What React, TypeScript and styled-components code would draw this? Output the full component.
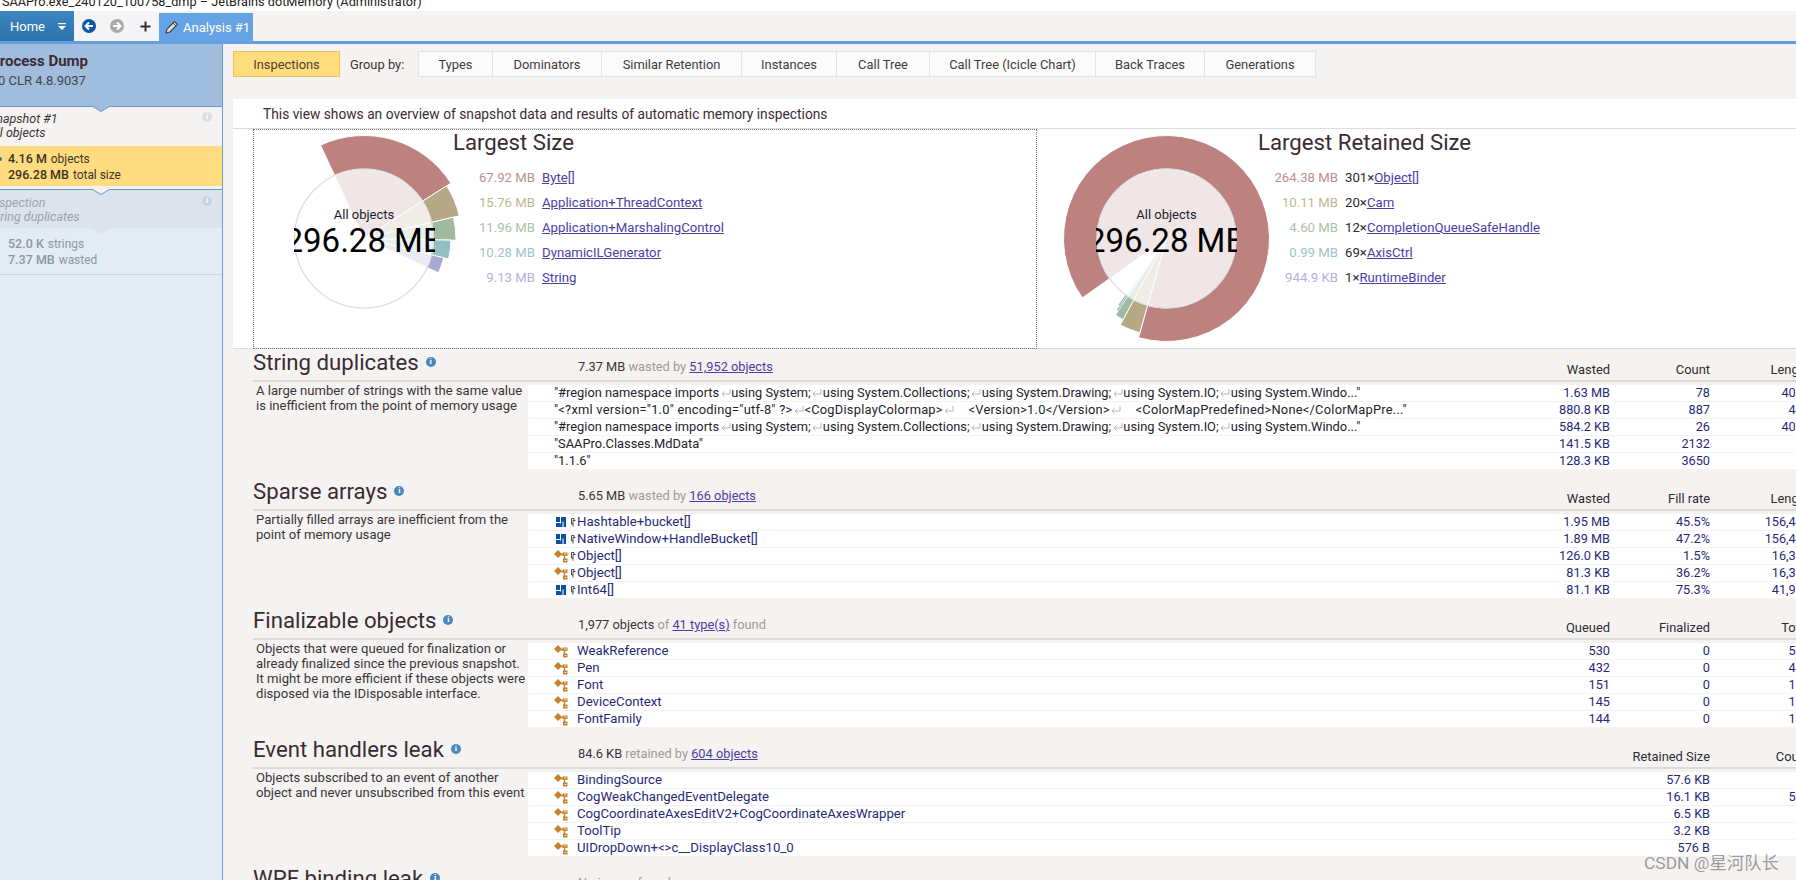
import React from "react";
import styled, { createGlobalStyle } from "styled-components";

const Global = createGlobalStyle`
  html, body { margin: 0; padding: 0; background: #fff; }
  body { font-family: Roboto, "Open Sans", "Liberation Sans", sans-serif; color: #333; }
  * { box-sizing: border-box; }
`;

const Page = styled.div`
  position: relative; width: 1796px; height: 880px; overflow: hidden;
  display: flex; flex-direction: column; background: #f4f3f1;
  font-size: 13.2px;
`;
const TitleBar = styled.div`
  height: 11px; background: #fff; overflow: hidden; flex: none;
  padding-left: 2px; font-size: 12.7px; line-height: 18px; color: #222; white-space: nowrap;
  & > span { display: block; margin-top: -7px; }
`;
const TabBar = styled.div`
  height: 33px; flex: none; display: flex; align-items: stretch; background: #f4f3f1;
  border-bottom: 3px solid #639fe0;
`;
const HomeTab = styled.div`
  width: 74px; background: linear-gradient(#3b86c2, #2c73ab); color: #fff;
  display: flex; align-items: center; justify-content: space-between; padding: 0 8px 0 10px; font-size: 13px;
`;
const NavButton = styled.div`
  width: 28px; display: flex; align-items: center; justify-content: center;
  &:first-of-type { margin-left: 1px; }
`;
const NavGroup = styled.div`
  display: flex; width: 85px; background: #f4f4f6;
`;
const AnalysisTab = styled.div`
  margin-top: 2px; width: 94px; background: #65a3e5; color: #fff; display: flex; align-items: center; gap: 4px;
  padding-left: 6px; font-size: 13px; white-space: nowrap;
`;
const Body = styled.div`
  flex: 1; display: flex; min-height: 0;
`;
const Sidebar = styled.div`
  width: 223px; flex: none; display: flex; flex-direction: column; overflow: hidden;
  border-right: 1px solid #6e9ac8; white-space: nowrap;
`;
const Notch = styled.div<{ $c: string; $line?: string }>`
  position: relative;
  &::before, &::after {
    content: ""; position: absolute; left: 91px; width: 0; height: 0;
    border-left: 10px solid transparent; border-right: 10px solid transparent; z-index: 2;
  }
  &::before { bottom: -6px; border-top: 6px solid ${(p) => p.$line ?? p.$c}; }
  &::after { bottom: -4.6px; border-top: 6px solid ${(p) => p.$c}; }
`;
const ProcessHead = styled(Notch)`
  height: 63px; flex: none; background: #a1bddd; border-bottom: 1px solid #6e98c4; padding-top: 7px; color: #3b2b33;
`;
const ProcessName = styled.div`
  margin-left: -10px; font-size: 15px; font-weight: 700; line-height: 20px;
`;
const ProcessSub = styled.div`
  margin-left: -2px; font-size: 13px; line-height: 20px; color: #444;
`;
const SnapshotHead = styled.div`
  flex: none; display: flex; justify-content: space-between; height: 39px;
  padding: 5px 10px 0 0; font-style: italic; line-height: 14px; font-size: 12.5px;
  background: #f4f3f1; color: #3b3338;
`;
const InspectHead = styled(Notch)`
  flex: none; display: flex; justify-content: space-between; height: 38px;
  padding: 6px 10px 0 0; font-style: italic; line-height: 14px; font-size: 12.5px;
  background: #dce3ec; color: #9aa3ae;
`;
const StepText = styled.div`
  margin-left: -11px;
`;
const InfoDot = styled.span<{ $c: string; $s?: number }>`
  display: inline-flex; align-items: center; justify-content: center; flex: none;
  width: ${(p) => p.$s ?? 10}px; height: ${(p) => p.$s ?? 10}px; border-radius: 50%; background: ${(p) => p.$c};
  color: #fff; font-size: 8px; font-weight: 700; line-height: 1; font-family: "Liberation Serif", serif;
`;
const StatBlock = styled.div<{ $bg: string; $c: string; $h: number }>`
  position: relative; flex: none; height: ${(p) => p.$h}px; background: ${(p) => p.$bg}; color: ${(p) => p.$c};
  padding: 5px 0 0 8px; font-size: 11.9px; line-height: 16px;
  & b { font-weight: 500; font-size: 12.5px; margin-right: 4px; }
`;
const Bullet = styled.span`
  position: absolute; left: -2px; top: 11px; width: 4px; height: 4px; border-radius: 50%; background: #2c73ab;
`;
const Spacer = styled(Notch)`
  height: 4px; flex: none; background: #f4f3f1; border-bottom: 1px solid #6e98c4;
`;
const SideFill = styled.div`
  flex: 1; background: #e3ebf4;
`;
const FillTop = styled(StatBlock)`
  padding-top: 8px; border-bottom: 1px solid #ccd5df;
`;
const Main = styled.div`
  flex: 1; min-width: 0; display: flex; flex-direction: column; padding: 7px 0 0 10px; overflow: hidden;
`;
const Toolbar = styled.div`
  display: flex; align-items: stretch; height: 26px; flex: none; margin-bottom: 22px; font-size: 12.9px;
`;
const Active = styled.div`
  width: 107px; background: #ffdc7c; border: 1px solid #eec25c; display: flex; align-items: center; justify-content: center; color: #4a4038;
`;
const GroupLabel = styled.div`
  width: 78px; padding-left: 10px; display: flex; align-items: center; color: #3b3338; white-space: nowrap;
`;
const GroupTab = styled.div<{ $w: number }>`
  width: ${(p) => p.$w}px; background: #fbfbfb; border: 1px solid #e4e4e4; border-left-width: 0;
  display: flex; align-items: center; justify-content: center; color: #3f3a40; white-space: nowrap;
  &:nth-child(3) { border-left-width: 1px; }
`;
const Overview = styled.div`
  background: #fff; flex: none;
`;
const Intro = styled.div`
  height: 30px; padding: 1px 0 0 30px; display: flex; align-items: center; font-size: 13.78px; color: #3b2b33;
  border-bottom: 1px solid #dcdcdc;
`;
const Charts = styled.div`
  height: 220px; display: grid; grid-template-columns: 20px 784px 1fr; border-bottom: 1px solid #dcdcdc;
`;
const ChartCell = styled.div<{ $dashed?: boolean }>`
  display: flex; min-width: 0;
  border: ${(p) => (p.$dashed ? "1px dotted #777" : "none")};
`;
const ChartBox = styled.div<{ $w: number }>`
  position: relative; flex: none; width: ${(p) => p.$w}px; height: 218px;
`;
const ChartSvg = styled.svg`
  display: block; overflow: visible;
`;
const ChartLabel = styled.div<{ $cx: number; $top: number }>`
  position: absolute; top: ${(p) => p.$top}px; left: ${(p) => p.$cx - 70.5}px; width: 141px; overflow: hidden;
  display: flex; flex-direction: column; align-items: center; color: #000; white-space: nowrap;
`;
const ChartCaption = styled.div`
  font-size: 13px; line-height: 18px; color: #1c1c2a;
`;
const ChartTotal = styled.div`
  font-size: 33px; line-height: 32px; margin-top: 1px;
`;
const LegendCol = styled.div<{ $shift?: number }>`
  display: flex; flex-direction: column; margin-top: ${(p) => p.$shift ?? 0}px;
`;
const LegendTitle = styled.div`
  font-size: 22.2px; line-height: 26px; color: #3b2b33; margin-bottom: 10px; white-space: nowrap;
`;
const LegendRow = styled.div<{ $vw: number }>`
  display: grid; grid-template-columns: ${(p) => p.$vw}px auto; column-gap: 7px; height: 25px; align-items: center; font-size: 13.2px;
  justify-content: start; white-space: nowrap;
`;
const LegendVal = styled.span<{ $c: string }>`
  text-align: right; color: ${(p) => p.$c};
`;
const LegendName = styled.span`
  color: #2f2a30;
`;
const Link = styled.span`
  color: #4a3ea3; text-decoration: underline;
`;
const Section = styled.section`
  flex: none; height: 129px; margin-right: -14px; padding-left: 20px;
`;
const SecHead = styled.div`
  display: grid; grid-template-columns: 275px 1fr 100px 100px 100px; grid-template-rows: 31px; height: 33px; align-items: start;
  border-bottom: 2px solid #dddbd9; margin-bottom: 3px;
`;
const HeadingWrap = styled.div`
  display: flex; align-items: center; gap: 7px; height: 29px; margin-top: -2px;
`;
const Heading = styled.h2`
  margin: 0; font-size: 22.2px; font-weight: 400; line-height: 28px; color: #3b2b33; white-space: nowrap;
`;
const Summary = styled.div`
  padding-left: 50px; line-height: 16px; margin-top: 10px; color: #a09a9a; white-space: nowrap; font-size: 12.8px;
  & b { font-weight: 400; color: #3b3338; }
`;
const ColHead = styled.div`
  text-align: right; line-height: 16px; margin-top: 13px; color: #2b2b33; white-space: nowrap; font-size: 12.9px;
`;
const SecBody = styled.div`
  display: grid; grid-template-columns: 275px 1fr;
`;
const Desc = styled.div`
  margin-top: -2px; padding-left: 3px; line-height: 15px; color: #3b3338; white-space: pre; font-size: 13.1px;
`;
const Rows = styled.div`
  display: flex; flex-direction: column; gap: 1px;
`;
const Row = styled.div`
  display: grid; grid-template-columns: 1fr 100px 100px 100px; height: 16px; background: #fff; align-items: center;
  line-height: 16px; padding-left: 26px; color: #1f2a78; white-space: nowrap;
`;
const Name = styled.div<{ $plain?: boolean; $wide?: boolean }>`
  display: flex; align-items: center; min-width: 0; overflow: hidden;
  color: ${(p) => (p.$plain ? "#23222c" : "#1f2a78")}; font-size: ${(p) => (p.$plain ? 12.85 : 13.2)}px;
  letter-spacing: ${(p) => (p.$wide ? 0.24 : 0)}px;
`;
const Cell = styled.div`
  text-align: right; font-size: 12.7px;
`;
const IconSlot = styled.span`
  width: 17px; flex: none; display: inline-flex; align-items: center;
`;
const PinSlot = styled.span`
  width: 6px; flex: none; display: inline-flex; align-items: center;
`;
const RetGlyph = styled.svg`
  flex: none; margin: 0 0.5px;
`;
const Chunk = styled.span`
  white-space: pre;
`;
const Watermark = styled.div`
  position: absolute; left: 1644px; top: 851px; font-size: 17.4px; line-height: 24px; color: rgba(110, 110, 110, 0.68);
  font-family: Roboto, "Noto Sans CJK SC", sans-serif; white-space: nowrap;
`;

const polar = (cx: number, cy: number, r: number, a: number) => {
  const t = (a * Math.PI) / 180;
  return [cx + r * Math.sin(t), cy - r * Math.cos(t)];
};
const wedge = (cx: number, cy: number, r0: number, r1: number, a0: number, a1: number) => {
  const large = a1 - a0 > 180 ? 1 : 0;
  const [x1, y1] = polar(cx, cy, r1, a0);
  const [x2, y2] = polar(cx, cy, r1, a1);
  if (r0 === 0) return `M${cx} ${cy}L${x1} ${y1}A${r1} ${r1} 0 ${large} 1 ${x2} ${y2}Z`;
  const [x3, y3] = polar(cx, cy, r0, a1);
  const [x4, y4] = polar(cx, cy, r0, a0);
  return `M${x1} ${y1}A${r1} ${r1} 0 ${large} 1 ${x2} ${y2}L${x3} ${y3}A${r0} ${r0} 0 ${large} 0 ${x4} ${y4}Z`;
};
const SECT = [
  { c: "#bd8280", t: "#f0e6e6", r: 103, v: "#c08f8d" },
  { c: "#b5a884", t: "#f0ede6", r: 98, v: "#c2b594" },
  { c: "#9fba9f", t: "#e8efe9", r: 92, v: "#a9c2a9" },
  { c: "#93bfc4", t: "#e6f1f2", r: 87, v: "#9cc6cb" },
  { c: "#a8a8d2", t: "#ecebf5", r: 82, v: "#b2b2d8" },
];

const Donut = ({ cx, cy, w, angles }: { cx: number; cy: number; w: number; angles: number[] }) => (
  <ChartSvg width={w} height={218} viewBox={`0 0 ${w} 218`}>
    {SECT.map((s, i) => (
      <g key={i}>
        <path d={wedge(cx, cy, 0, 69.5, angles[i], angles[i + 1])} fill={s.t} stroke="#fff" strokeWidth="1" />
        <path d={wedge(cx, cy, 69.5, s.r, angles[i], angles[i + 1])} fill={s.c} stroke="#fff" strokeWidth={i > 2 && angles[i + 1] - angles[i] < 3 ? 0.3 : 1} />
      </g>
    ))}
    <circle cx={cx} cy={cy} r={69.5} fill="none" stroke="#dadada" strokeWidth="1.2" />
  </ChartSvg>
);

const Info = () => <InfoDot $c="#4a86bd">i</InfoDot>;

const OrangeIcon = () => (
  <svg width="14" height="14" viewBox="0 0 14 14">
    <path d="M0 5 L4 1 L8 5 L4 9Z" fill="#c9822c" />
    <path d="M8.5 3.5 H13.5 V7 H8.5Z M9 9.5 H13.5 V13.5 H9Z" fill="#c9822c" />
    <path d="M6.5 5.5 H10.5 V11" fill="none" stroke="#c9822c" strokeWidth="1.4" />
    <path d="M10 5 H12.5 M10.5 11.5 H12.5" stroke="#fbe7c8" strokeWidth="0.9" />
  </svg>
);
const BlueIcon = () => (
  <svg width="14" height="12" viewBox="0 0 14 12">
    <rect x="2" y="1" width="10" height="10" fill="#0f4f9f" />
    <path d="M6.5 1 V7.5 M2 6.5 H6.5 M9 5.5 V11" stroke="#fff" strokeWidth="1" fill="none" />
  </svg>
);
const Pin = () => (
  <svg width="5" height="9" viewBox="0 0 5 9">
    <path d="M0.5 0.5 H3 V2.5 M4.5 2.5 H2 V8.5 M0.5 0.5 V6 H2" fill="none" stroke="#3a3a3a" strokeWidth="0.9" />
  </svg>
);
const Ret = () => (
  <RetGlyph width="11" height="10" viewBox="0 0 11 10">
    <path d="M10 1 V6 H2 M4.5 3.5 L2 6 L4.5 8.5" fill="none" stroke="#b4b8c4" strokeWidth="1" />
  </RetGlyph>
);

const withRet = (s: string) => {
  const parts = s.split("|");
  return parts.map((p, i) => (
    <React.Fragment key={i}>
      <Chunk>{p}</Chunk>
      {i < parts.length - 1 && <Ret />}
    </React.Fragment>
  ));
};

type Sec = {
  title: string;
  summary: React.ReactNode;
  cols: string[];
  desc: string;
  rows: { icon?: "o" | "b"; pin?: boolean; plain?: boolean; wide?: boolean; name: string; v: string[] }[];
};

const sections: Sec[] = [
  {
    title: "String duplicates",
    summary: <><b>7.37 MB</b> wasted by <Link>51,952 objects</Link></>,
    cols: ["Wasted", "Count", "Length"],
    desc: "A large number of strings with the same value\nis inefficient from the point of memory usage",
    rows: [
      { plain: true, name: '"#region namespace imports|using System;|using System.Collections;|using System.Drawing;|using System.IO;|using System.Windo..."', v: ["1.63 MB", "78", "4098"] },
      { plain: true, wide: true, name: '"<?xml version="1.0" encoding="utf-8" ?>|<CogDisplayColormap>|    <Version>1.0</Version>|    <ColorMapPredefined>None</ColorMapPre..."', v: ["880.8 KB", "887", "496"] },
      { plain: true, name: '"#region namespace imports|using System;|using System.Collections;|using System.Drawing;|using System.IO;|using System.Windo..."', v: ["584.2 KB", "26", "4098"] },
      { plain: true, name: '"SAAPro.Classes.MdData"', v: ["141.5 KB", "2132", "21"] },
      { plain: true, name: '"1.1.6"', v: ["128.3 KB", "3650", "5"] },
    ],
  },
  {
    title: "Sparse arrays",
    summary: <><b>5.65 MB</b> wasted by <Link>166 objects</Link></>,
    cols: ["Wasted", "Fill rate", "Length"],
    desc: "Partially filled arrays are inefficient from the\npoint of memory usage",
    rows: [
      { icon: "b", pin: true, name: "Hashtable+bucket[]", v: ["1.95 MB", "45.5%", "156,484"] },
      { icon: "b", pin: true, name: "NativeWindow+HandleBucket[]", v: ["1.89 MB", "47.2%", "156,484"] },
      { icon: "o", pin: true, name: "Object[]", v: ["126.0 KB", "1.5%", "16,384"] },
      { icon: "o", pin: true, name: "Object[]", v: ["81.3 KB", "36.2%", "16,384"] },
      { icon: "b", pin: true, name: "Int64[]", v: ["81.1 KB", "75.3%", "41,984"] },
    ],
  },
  {
    title: "Finalizable objects",
    summary: <><b>1,977 objects</b> of <Link>41 type(s)</Link> found</>,
    cols: ["Queued", "Finalized", "Total"],
    desc: "Objects that were queued for finalization or\nalready finalized since the previous snapshot.\nIt might be more efficient if these objects were\ndisposed via the IDisposable interface.",
    rows: [
      { icon: "o", name: "WeakReference", v: ["530", "0", "530"] },
      { icon: "o", name: "Pen", v: ["432", "0", "432"] },
      { icon: "o", name: "Font", v: ["151", "0", "151"] },
      { icon: "o", name: "DeviceContext", v: ["145", "0", "145"] },
      { icon: "o", name: "FontFamily", v: ["144", "0", "144"] },
    ],
  },
  {
    title: "Event handlers leak",
    summary: <><b>84.6 KB</b> retained by <Link>604 objects</Link></>,
    cols: ["", "Retained Size", "Count"],
    desc: "Objects subscribed to an event of another\nobject and never unsubscribed from this event",
    rows: [
      { icon: "o", name: "BindingSource", v: ["", "57.6 KB", "4"] },
      { icon: "o", name: "CogWeakChangedEventDelegate", v: ["", "16.1 KB", "503"] },
      { icon: "o", name: "CogCoordinateAxesEditV2+CogCoordinateAxesWrapper", v: ["", "6.5 KB", "4"] },
      { icon: "o", name: "ToolTip", v: ["", "3.2 KB", "2"] },
      { icon: "o", name: "UIDropDown+<>c__DisplayClass10_0", v: ["", "576 B", "9"] },
    ],
  },
  {
    title: "WPF binding leak",
    summary: <>No issues found</>,
    cols: ["", "", ""],
    desc: "",
    rows: [],
  },
];

const groupTabs: [string, number][] = [
  ["Types", 75], ["Dominators", 109], ["Similar Retention", 140], ["Instances", 95],
  ["Call Tree", 93], ["Call Tree (Icicle Chart)", 166], ["Back Traces", 109], ["Generations", 111],
];

const leftLegend = [
  ["67.92 MB", "Byte[]"], ["15.76 MB", "Application+ThreadContext"], ["11.96 MB", "Application+MarshalingControl"],
  ["10.28 MB", "DynamicILGenerator"], ["9.13 MB", "String"],
];
const rightLegend = [
  ["264.38 MB", "301×", "Object[]"], ["10.11 MB", "20×", "Cam"], ["4.60 MB", "12×", "CompletionQueueSafeHandle"],
  ["0.99 MB", "69×", "AxisCtrl"], ["944.9 KB", "1×", "RuntimeBinder"],
];

export default function App() {
  return (
    <Page>
      <Global />
      <TitleBar><span>SAAPro.exe_240120_100758_dmp – JetBrains dotMemory (Administrator)</span></TitleBar>
      <TabBar>
        <HomeTab>
          Home
          <svg width="8" height="7" viewBox="0 0 8 7"><path d="M0 0.5H8" stroke="#fff" strokeWidth="1.4" /><path d="M0 3H8L4 7Z" fill="#fff" /></svg>
        </HomeTab>
        <NavGroup>
          <NavButton>
            <svg width="14" height="14" viewBox="0 0 14 14"><circle cx="7" cy="7" r="7" fill="#0b56a5" /><path d="M11 7H4M7 3.5L3.5 7L7 10.5" stroke="#fff" strokeWidth="2" fill="none" /></svg>
          </NavButton>
          <NavButton>
            <svg width="14" height="14" viewBox="0 0 14 14"><circle cx="7" cy="7" r="7" fill="#a9a9a9" /><path d="M3 7H10M7 3.5L10.5 7L7 10.5" stroke="#fff" strokeWidth="2" fill="none" /></svg>
          </NavButton>
          <NavButton>
            <svg width="11" height="11" viewBox="0 0 11 11"><path d="M5.5 0.5V10.5M0.5 5.5H10.5" stroke="#3b2b33" strokeWidth="2" /></svg>
          </NavButton>
        </NavGroup>
        <AnalysisTab>
          <svg width="14" height="14" viewBox="0 0 14 14"><path d="M1 13L2 9L9.5 1.5L12.5 4.5L5 12Z" fill="#dcdcdc" stroke="#3f3f48" strokeWidth="1.1" /><path d="M8 3L11 6" stroke="#3f3f48" strokeWidth="1" /></svg>
          Analysis #1
        </AnalysisTab>
      </TabBar>
      <Body>
        <Sidebar>
          <ProcessHead $c="#a1bddd" $line="#6e98c4">
            <ProcessName>Process Dump</ProcessName>
            <ProcessSub>0 CLR 4.8.9037</ProcessSub>
          </ProcessHead>
          <SnapshotHead>
            <StepText>Snapshot #1<br />All objects</StepText>
            <InfoDot $c="#dfdfdf">i</InfoDot>
          </SnapshotHead>
          <StatBlock $bg="#ffdc7f" $c="#3d3324" $h={40}>
            <Bullet />
            <div><b>4.16 M</b>objects</div>
            <div><b>296.28 MB</b>total size</div>
          </StatBlock>
          <Spacer $c="#f4f3f1" $line="#6e98c4" />
          <InspectHead $c="#dce3ec">
            <StepText>Inspection<br />String duplicates</StepText>
            <InfoDot $c="#c5d2e2">i</InfoDot>
          </InspectHead>
          <FillTop $bg="#e3ebf4" $c="#8d97a2" $h={47}>
            <div><b>52.0 K</b>strings</div>
            <div><b>7.37 MB</b>wasted</div>
          </FillTop>
          <SideFill />
        </Sidebar>
        <Main>
          <Toolbar>
            <Active>Inspections</Active>
            <GroupLabel>Group by:</GroupLabel>
            {groupTabs.map(([t, w]) => <GroupTab key={t} $w={w}>{t}</GroupTab>)}
          </Toolbar>
          <Overview>
            <Intro>This view shows an overview of snapshot data and results of automatic memory inspections</Intro>
            <Charts>
              <div />
              <ChartCell $dashed>
                <ChartBox $w={199}>
                  <Donut cx={110} cy={108.5} w={199} angles={[-25, 57.5, 76.6, 91.1, 103.6, 114.7]} />
                  <ChartLabel $cx={110} $top={76}><ChartCaption>All objects</ChartCaption><ChartTotal>296.28 MB</ChartTotal></ChartLabel>
                </ChartBox>
                <LegendCol $shift={-1}>
                  <LegendTitle>Largest Size</LegendTitle>
                  {leftLegend.map(([v, n], i) => (
                    <LegendRow key={n} $vw={82}><LegendVal $c={SECT[i].v}>{v}</LegendVal><Link>{n}</Link></LegendRow>
                  ))}
                </LegendCol>
              </ChartCell>
              <ChartCell>
                <ChartBox $w={221}>
                  <Donut cx={129.5} cy={109.5} w={221} angles={[-125.2, 195.8, 208.1, 213.7, 214.9, 216]} />
                  <ChartLabel $cx={129.5} $top={77}><ChartCaption>All objects</ChartCaption><ChartTotal>296.28 MB</ChartTotal></ChartLabel>
                </ChartBox>
                <LegendCol>
                  <LegendTitle>Largest Retained Size</LegendTitle>
                  {rightLegend.map(([v, c, n], i) => (
                    <LegendRow key={n} $vw={80}><LegendVal $c={SECT[i].v}>{v}</LegendVal><LegendName>{c}<Link>{n}</Link></LegendName></LegendRow>
                  ))}
                </LegendCol>
              </ChartCell>
            </Charts>
          </Overview>
          {sections.map((s) => (
            <Section key={s.title}>
              <SecHead>
                <HeadingWrap><Heading>{s.title}</Heading><Info /></HeadingWrap>
                <Summary>{s.summary}</Summary>
                {s.cols.map((c, i) => <ColHead key={i}>{c}</ColHead>)}
              </SecHead>
              <SecBody>
                <Desc>{s.desc}</Desc>
                <Rows>
                  {s.rows.map((r, i) => (
                    <Row key={i}>
                      <Name $plain={r.plain} $wide={r.wide}>
                        {r.icon && <IconSlot>{r.icon === "o" ? <OrangeIcon /> : <BlueIcon />}</IconSlot>}
                        {r.icon && <PinSlot>{r.pin && <Pin />}</PinSlot>}
                        {r.plain ? withRet(r.name) : r.name}
                      </Name>
                      {r.v.map((v, j) => <Cell key={j}>{v}</Cell>)}
                    </Row>
                  ))}
                </Rows>
              </SecBody>
            </Section>
          ))}
        </Main>
      </Body>
      <Watermark>CSDN @星河队长</Watermark>
    </Page>
  );
}
